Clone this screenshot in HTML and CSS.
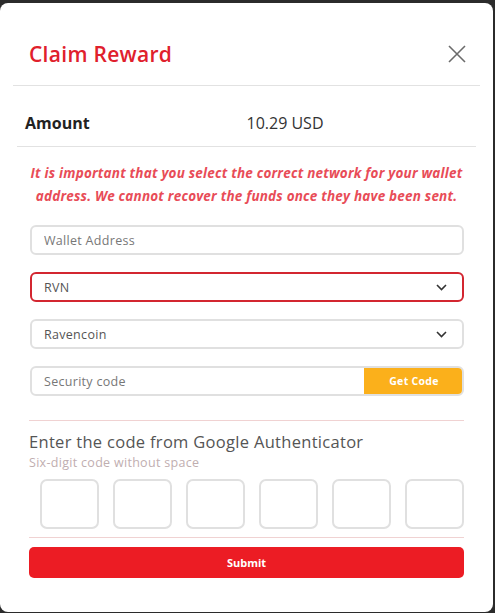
FILE: index.html
```html
<!DOCTYPE html>
<html lang="en">
  <head>
    <meta charset="UTF-8" />
    <meta name="viewport" content="width=device-width, initial-scale=1.0" />
    <title>Claim Reward</title>
    <link rel="stylesheet" href="styles.css">
  </head>
  <body>
    <div class="modal">
      <div class="modal-header">
        <h2>Claim Reward</h2>
        <button class="close" aria-label="Close">
          <svg width="18" height="18" viewBox="0 0 18 18">
            <path d="M1 1L17 17M17 1L1 17" stroke="#6b6b6b" stroke-width="1.6" fill="none" />
          </svg>
        </button>
      </div>

      <div class="amount-row">
        <span class="label">Amount</span>
        <span class="value">10.29 USD</span>
      </div>

      <div class="modal-body">
        <p class="warning">
          It is important that you select the correct network for your wallet
          address. We cannot recover the funds once they have been sent.
        </p>

        <div class="field">
          <input type="text" placeholder="Wallet Address" />
        </div>

        <div class="field select active">
          <span>RVN</span>
          <svg class="chevron" width="11" height="7" viewBox="0 0 11 7">
            <path d="M1 1L5.5 5.5L10 1" stroke="#333" stroke-width="1.6" fill="none" />
          </svg>
        </div>

        <div class="field select">
          <span>Ravencoin</span>
          <svg class="chevron" width="11" height="7" viewBox="0 0 11 7">
            <path d="M1 1L5.5 5.5L10 1" stroke="#333" stroke-width="1.6" fill="none" />
          </svg>
        </div>

        <div class="field code-field">
          <input type="text" placeholder="Security code" />
          <button class="get-code">Get Code</button>
        </div>

        <div class="auth">
          <h3>Enter the code from Google Authenticator</h3>
          <p class="hint">Six-digit code without space</p>
          <div class="digits">
            <input type="text" maxlength="1" />
            <input type="text" maxlength="1" />
            <input type="text" maxlength="1" />
            <input type="text" maxlength="1" />
            <input type="text" maxlength="1" />
            <input type="text" maxlength="1" />
          </div>
        </div>

        <button class="submit">Submit</button>
      </div>
    </div>
  </body>
</html>
```

FILE: styles.css
```css
* {
  box-sizing: border-box;
}
body {
  margin: 0;
  background: #2b2b2b;
  font-family: "Open Sans", Arial, sans-serif;
  color: #333;
}
.modal {
  width: 493px;
  height: 609px;
  margin-top: 3px;
  background: white;
  border-radius: 8px;
}
.modal-header {
  display: flex;
  align-items: center;
  justify-content: space-between;
  margin: 0 13px;
  padding: 36px 14px 16px 16px;
  border-bottom: 1px solid #e2e2e2;
}
.modal-header h2 {
  margin: 0;
  font-size: 21px;
  line-height: 30px;
  font-weight: 600;
  letter-spacing: 0.3px;
  color: #e0202c;
}
.close {
  border: none;
  background: none;
  padding: 0;
  width: 18px;
  height: 18px;
}
.amount-row {
  display: grid;
  grid-template-columns: 1fr 1fr;
  margin: 0 17px;
  padding: 26px 8px 12px;
  border-bottom: 1px solid #e2e2e2;
  font-size: 16px;
  line-height: 22px;
}
.amount-row .label {
  font-weight: 700;
  color: #222;
}
.amount-row .value {
  color: #333;
}
.modal-body {
  padding: 15px 29px 0 29px;
}
.warning {
  margin: 0 0 17px;
  text-align: center;
  font-size: 13.5px;
  line-height: 23px;
  font-style: italic;
  font-weight: 700;
  letter-spacing: 0.2px;
  color: #e84c57;
}
.field {
  display: flex;
  align-items: center;
  height: 30px;
  margin: 0 0 17px 1px;
  border: 2px solid #e0e0e0;
  border-radius: 6px;
  font-size: 12.5px;
  letter-spacing: 0.3px;
  color: #666;
}
.field input {
  flex: 1;
  height: 100%;
  border: none;
  outline: none;
  padding: 0 12px;
  background: none;
  font-family: inherit;
  font-size: 12.5px;
  letter-spacing: 0.3px;
}
.field input::placeholder {
  color: #777;
}
.select {
  justify-content: space-between;
  padding: 0 15px 0 12px;
}
.select span {
  color: #555;
}
.select.active {
  border-color: #d32630;
}
.code-field {
  overflow: hidden;
  margin-bottom: 24px;
}
.get-code {
  width: 100px;
  height: 30px;
  margin-right: -2px;
  border: none;
  background: #fbb01b;
  color: white;
  font-family: inherit;
  font-size: 10.5px;
  font-weight: 700;
  letter-spacing: 0.3px;
}
.auth {
  border-top: 1px solid #f0d2d2;
  border-bottom: 1px solid #f0d2d2;
  padding: 10px 0 8px;
}
.auth h3 {
  margin: 0;
  font-size: 16.5px;
  line-height: 22px;
  font-weight: 400;
  letter-spacing: 0.3px;
  color: #555;
}
.hint {
  margin: 0 0 6px;
  font-size: 12.5px;
  line-height: 20px;
  letter-spacing: 0.3px;
  color: #bfaeb0;
}
.digits {
  display: flex;
  justify-content: space-between;
  padding-left: 11px;
}
.digits input {
  width: 59px;
  height: 50px;
  border: 2px solid #e0e0e0;
  border-radius: 7px;
  outline: none;
}
.submit {
  display: block;
  width: 100%;
  height: 31px;
  margin-top: 9px;
  border: none;
  border-radius: 5px;
  background: #ec1c24;
  color: white;
  font-family: inherit;
  font-size: 11px;
  font-weight: 700;
}
```
